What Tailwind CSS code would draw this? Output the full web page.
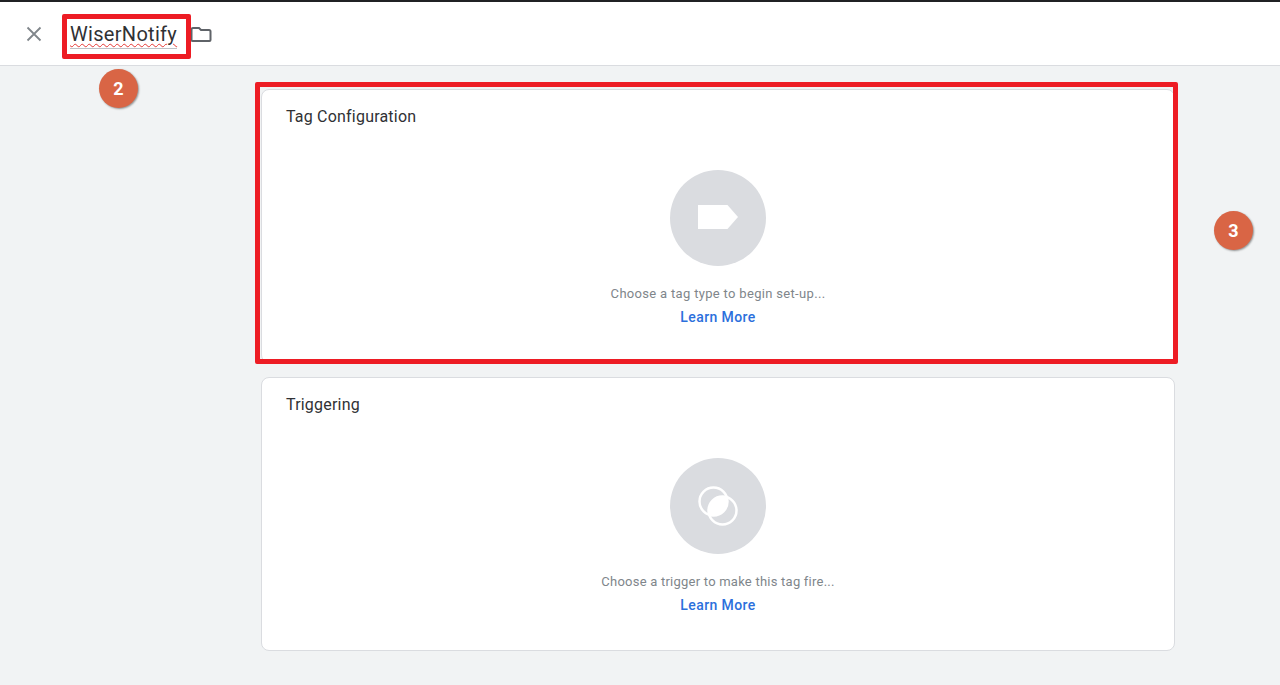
<!DOCTYPE html>
<html lang="en">
<head>
  <meta charset="UTF-8" />
  <title>WiserNotify</title>
  <script src="https://cdn.jsdelivr.net/npm/@tailwindcss/browser@4"></script>
</head>
<body class="relative h-[685px] overflow-hidden bg-[#f1f3f4] font-['Roboto',sans-serif]">

  <header class="flex h-[66px] items-center border-t-2 border-b border-t-[#202124] border-b-[#dadce0] bg-white pl-[25px]">
    <svg class="h-[18px] w-[18px]" viewBox="0 0 18 18" fill="none" stroke="#80868b" stroke-width="1.8"><path d="M2.500 2.500l13 13M15.500 2.500l-13 13"/></svg>
    <div class="ml-[27px] mt-[3px] w-[107px] border-b border-[#bdc1c6] pb-[1px] text-[20px] leading-[26px] tracking-[0.3px] text-[#303134] underline decoration-wavy decoration-[#e53935] decoration-1 underline-offset-2">WiserNotify</div>
    <svg class="ml-[12px] h-[24px] w-[24px]" viewBox="0 0 24 24" fill="none" stroke="#5f6368" stroke-width="2"><path d="M4 6h6l2 2h8a1.500 1.500 0 0 1 1.500 1.500V18a1 1 0 0 1-1 1H3.500a1 1 0 0 1-1-1V7.500A1.500 1.500 0 0 1 4 6z"/></svg>
  </header>

  <main class="ml-[261px] flex w-[914px] flex-col gap-[14px] pt-[23px]">
    <section class="h-[274px] rounded-lg border border-[#dadce0] bg-white">
      <h2 class="pl-[24px] pt-[17px] text-[16px] leading-5 tracking-[0.2px] text-[#303134]">Tag Configuration</h2>
      <div class="mt-[43px] flex flex-col items-center">
        <div class="flex h-[96px] w-[96px] items-center justify-center rounded-full bg-[#dadce0]">
          <svg class="h-[42px] w-[42px]" viewBox="0 0 42 42" fill="white"><path d="M1 8h29.500L41 20 30.500 32H1z"/></svg>
        </div>
        <p class="mt-[20px] text-[13px] leading-[16px] tracking-[0.32px] text-[#80868b]">Choose a tag type to begin set-up...</p>
        <a class="mt-[7px] text-[14px] font-medium leading-[17px] tracking-[0.4px] text-[#2b6fdc]">Learn More</a>
      </div>
    </section>
    <section class="h-[274px] rounded-lg border border-[#dadce0] bg-white">
      <h2 class="pl-[24px] pt-[17px] text-[16px] leading-5 tracking-[0.2px] text-[#303134]">Triggering</h2>
      <div class="mt-[43px] flex flex-col items-center">
        <div class="flex h-[96px] w-[96px] items-center justify-center rounded-full bg-[#dadce0]">
          <svg class="h-[42px] w-[42px]" viewBox="0 0 42 42" fill="none" stroke="white" stroke-width="2.500">
            <circle cx="25.500" cy="25.500" r="14"/>
            <circle cx="16.500" cy="16.500" r="14"/>
            <path fill="white" stroke="none" d="M12.180 29.820A14 14 0 0 1 29.820 12.180 14 14 0 0 1 12.180 29.820z"/>
          </svg>
        </div>
        <p class="mt-[20px] text-[13px] leading-[16px] tracking-[0.23px] text-[#80868b]">Choose a trigger to make this tag fire...</p>
        <a class="mt-[7px] text-[14px] font-medium leading-[17px] tracking-[0.4px] text-[#2b6fdc]">Learn More</a>
      </div>
    </section>
  </main>

  <!-- annotations on top of the screenshot -->
  <div class="absolute left-[62px] top-[14px] h-[45px] w-[129px] rounded-[2px] border-[5px] border-[#ed1c24]"></div>
  <div class="absolute left-[255px] top-[82px] h-[282px] w-[923px] rounded-[2px] border-[5px] border-[#ed1c24]"></div>
  <div class="absolute left-[99px] top-[69px] flex h-[39px] w-[39px] items-center justify-center rounded-full bg-[#d96545] text-[18px] font-bold text-white shadow-[1px_1px_2px_rgba(0,0,0,0.4)]">2</div>
  <div class="absolute left-[1214px] top-[211px] flex h-[39px] w-[39px] items-center justify-center rounded-full bg-[#d96545] text-[18px] font-bold text-white shadow-[1px_1px_2px_rgba(0,0,0,0.4)]">3</div>

</body>
</html>
